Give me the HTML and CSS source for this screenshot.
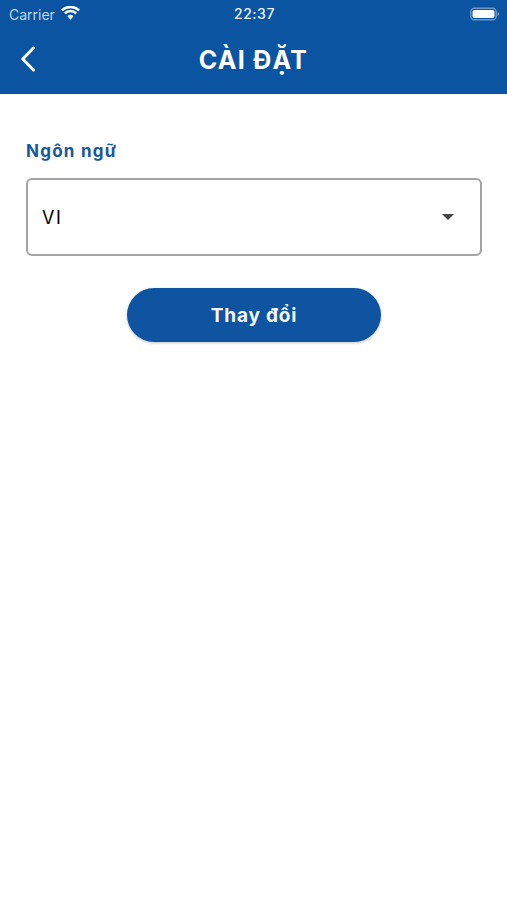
FILE: index.html
```html
<!DOCTYPE html>
<html lang="vi">
<head>
<meta charset="utf-8">
<title>Cài đặt</title>
<link rel="stylesheet" href="styles.css">
</head>
<body>
<header class="header">
  <div class="status">
    <div class="status-left">
      <span class="carrier">Carrier</span>
      <svg class="wifi" viewBox="0 0 20 14" width="19" height="14" aria-hidden="true">
        <path d="M10 14 6.800 10.300a4.600 4.600 0 0 1 6.400 0Z" fill="#fff"/>
        <path d="M4 7.400a8.600 8.600 0 0 1 12 0" fill="none" stroke="#fff" stroke-width="2.600"/>
        <path d="M1 4.200a13 13 0 0 1 18 0" fill="none" stroke="#fff" stroke-width="2.600"/>
      </svg>
    </div>
    <span class="time">22:37</span>
    <div class="status-right">
      <svg class="battery" viewBox="0 0 30 14" width="30" height="14" aria-hidden="true">
        <rect x="0.800" y="1.200" width="25.400" height="11.600" rx="3.600" fill="none" stroke="#fff" stroke-opacity=".4" stroke-width="1.400"/>
        <rect x="2.500" y="3" width="22" height="8" rx="2" fill="#fff"/>
        <path d="M27.600 5v4c.9-.3 1.500-1.100 1.500-2s-.6-1.700-1.500-2Z" fill="#fff" fill-opacity=".45"/>
      </svg>
    </div>
  </div>
  <div class="nav">
    <svg class="back" viewBox="0 0 16 26" width="16" height="26" aria-hidden="true">
      <path d="M13.500 2 2.800 13l10.700 11" fill="none" stroke="#fff" stroke-width="3" stroke-linecap="round" stroke-linejoin="round"/>
    </svg>
    <h1 class="title">CÀI ĐẶT</h1>
  </div>
</header>
<main class="content">
  <div class="label">Ngôn ngữ</div>
  <div class="select">
    <span class="select-value">VI</span>
    <span class="caret"></span>
  </div>
  <button class="button" type="button">Thay đổi</button>
</main>
</body>
</html>
```

FILE: styles.css
```css
* { box-sizing: border-box; }
html, body { margin: 0; padding: 0; }
body {
  width: 507px;
  height: 900px;
  background: #fff;
  font-family: Inter, Roboto, "Liberation Sans", sans-serif;
  overflow: hidden;
}
.header {
  height: 94px;
  background: #0a54a1;
  color: #fff;
  display: flex;
  flex-direction: column;
}
.status {
  height: 28px;
  padding: 0 7px 0 9px;
  display: grid;
  grid-template-columns: 1fr auto 1fr;
  align-items: center;
}
.status-left { display: flex; align-items: center; gap: 6px; }
.carrier { font-size: 14px; color: #c4d6ea; }
.wifi { margin-top: -3px; }
.time { font-size: 14px; font-weight: 500; letter-spacing: 0.5px; color: #eef3f9; margin-top: -1px; }
.status-right { display: flex; justify-content: flex-end; }
.nav {
  flex: 1;
  position: relative;
  display: flex;
  align-items: center;
  justify-content: center;
  padding-bottom: 2px;
}
.back { position: absolute; left: 20px; top: 18px; }
.title {
  margin: 0;
  font-size: 25px;
  font-weight: 700;
  letter-spacing: 1.300px;
  line-height: 32px;
}
.content {
  padding: 46px 25px 0 26px;
  display: flex;
  flex-direction: column;
}
.label {
  font-size: 17px;
  font-weight: 700;
  letter-spacing: 1.250px;
  line-height: 22px;
  color: #17579d;
}
.select {
  margin-top: 16px;
  height: 78px;
  padding: 0 26px 0 14px;
  border: 2px solid #a3a3a3;
  border-radius: 6px;
  display: flex;
  align-items: center;
  justify-content: space-between;
}
.select-value { font-size: 18px; letter-spacing: 1.500px; color: #000; }
.caret {
  width: 0;
  height: 0;
  border-left: 6.500px solid transparent;
  border-right: 6.500px solid transparent;
  border-top: 6px solid #444;
  margin-top: -1px;
}
.button {
  margin: 32px auto 0;
  width: 254px;
  height: 54px;
  padding-top: 2px;
  border: 0;
  border-radius: 27px;
  background: #0f54a1;
  color: #f4f7fb;
  font-family: inherit;
  font-size: 19px;
  font-weight: 700;
  letter-spacing: 0.800px;
  box-shadow: 0 1px 3px rgba(0, 0, 0, 0.25);
}
```
